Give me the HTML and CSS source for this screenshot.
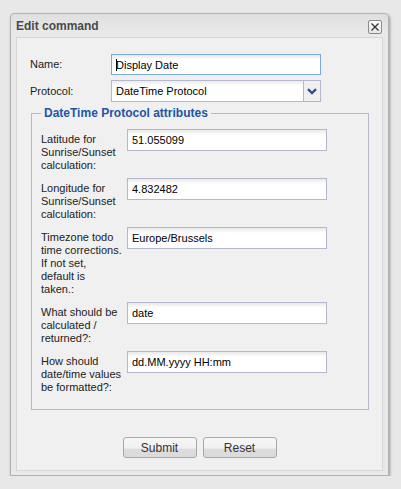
FILE: index.html
```html
<!DOCTYPE html>
<html>
<head>
<meta charset="utf-8">
<link rel="stylesheet" href="styles.css">
</head>
<body>
<div class="dialog">
  <div class="titlebar">
    <span class="title">Edit command</span>
    <span class="close"><svg width="10" height="10" viewBox="0 0 10 10"><path d="M1.5 1.5 L8.5 8.5 M8.5 1.5 L1.5 8.5" stroke="#333" stroke-width="1.3" fill="none"/></svg></span>
  </div>
  <div class="content">
    <div class="toprows">
      <label class="toplabel">Name:</label>
      <div class="field focused"><span class="caret"></span>Display Date</div>
      <label class="toplabel">Protocol:</label>
      <div class="select">
        <span class="selval">DateTime Protocol</span>
        <span class="arrow"><svg width="10" height="7" viewBox="0 0 10 7"><path d="M1 1.2 L5 5 L9 1.2" stroke="#2f4f8f" stroke-width="2.4" fill="none"/></svg></span>
      </div>
    </div>
    <fieldset class="attrs">
      <legend>DateTime Protocol attributes</legend>
      <div class="rows">
        <div class="lbl">Latitude for Sunrise/Sunset calculation:</div>
        <div class="field">51.055099</div>
        <div class="lbl">Longitude for Sunrise/Sunset calculation:</div>
        <div class="field">4.832482</div>
        <div class="lbl">Timezone todo time corrections.<br>If not set,<br>default is<br>taken.:</div>
        <div class="field">Europe/Brussels</div>
        <div class="lbl">What should be calculated / returned?:</div>
        <div class="field">date</div>
        <div class="lbl">How should date/time values be formatted?:</div>
        <div class="field">dd.MM.yyyy HH:mm</div>
      </div>
    </fieldset>
    <div class="buttons">
      <button class="btn">Submit</button>
      <button class="btn">Reset</button>
    </div>
  </div>
</div>
</body>
</html>
```
FILE: styles.css
```css
html, body {
  margin: 0;
  padding: 0;
  background: #e8e8e8;
  font-family: "Liberation Sans", Arial, sans-serif;
}
.dialog {
  margin: 13px 0 0 10px;
  width: 379px;
  box-sizing: border-box;
  border: 1px solid #b0b0b0;
  border-radius: 4px 4px 0 0;
  background: linear-gradient(#dfdfdf, #e9e9e9 20px, #e9e9e9);
  box-shadow: 1px 2px 3px rgba(0,0,0,0.35);
  padding: 0 5px 4px 5px;
}
.titlebar {
  height: 23px;
  display: flex;
  align-items: center;
  justify-content: space-between;
}
.title {
  font-weight: bold;
  font-size: 12px;
  color: #4a4a4a;
  margin-top: 1px;
}
.close {
  width: 14px;
  height: 14px;
  box-sizing: border-box;
  border: 1px solid #8a8a8a;
  border-radius: 2px;
  background: linear-gradient(#fdfdfd, #e6e6e6);
  display: flex;
  align-items: center;
  justify-content: center;
  margin-right: 1px;
  margin-top: 2px;
}
.content {
  background: #f0f0f0;
  border: 1px solid #d6d6d6;
  padding: 16px 0 12px 13px;
}
.toprows {
  display: grid;
  grid-template-columns: 81px 210px;
  row-gap: 5px;
  align-items: center;
}
.toplabel {
  font-size: 11px;
  color: #222;
  margin-top: -1px;
}
.field {
  box-sizing: border-box;
  height: 22px;
  border: 1px solid #b4b8cc;
  background: linear-gradient(#e9e9e9, #ffffff 5px, #ffffff);
  font-size: 11px;
  color: #000;
  display: flex;
  align-items: center;
  padding-left: 4px;
  position: relative;
}
.field.focused {
  height: 21px;
  border-color: #7ba9dd;
}
.caret {
  position: absolute;
  left: 4px;
  top: 4px;
  width: 1px;
  height: 12px;
  background: #000;
}
.select {
  box-sizing: border-box;
  height: 22px;
  border: 1px solid #b4b8cc;
  background: linear-gradient(#ececec, #ffffff 5px, #ffffff);
  display: flex;
  align-items: stretch;
}
.selval {
  flex: 1;
  font-size: 11px;
  color: #000;
  display: flex;
  align-items: center;
  padding-left: 4px;
}
.arrow {
  width: 16px;
  border-left: 1px solid #b4b8cc;
  background: #f0f0f0;
  display: flex;
  align-items: center;
  justify-content: center;
}
.attrs {
  margin: 4px 0 0 1px;
  width: 338px;
  box-sizing: border-box;
  border: 1px solid #b6b9cc;
  padding: 8px 0 15px 9px;
  min-width: 0;
}
.attrs legend {
  font-weight: bold;
  font-size: 12px;
  color: #1f55a5;
  padding: 0 3px;
  line-height: 15px;
}
.rows {
  display: grid;
  grid-template-columns: 86px 200px;
  row-gap: 6px;
  align-items: start;
}
.lbl {
  font-size: 11px;
  line-height: 13px;
  color: #222;
  padding-top: 4px;
  padding-right: 2px;
}
.buttons {
  display: flex;
  justify-content: center;
  gap: 6px;
  margin-top: 27px;
  padding-right: 13px;
}
.btn {
  width: 74px;
  height: 21px;
  box-sizing: border-box;
  border: 1px solid #a8a8a8;
  border-radius: 3px;
  background: linear-gradient(#f6f6f6, #f0f0f0 55%, #dcdcdc 56%, #dcdcdc);
  font-family: "Liberation Sans", Arial, sans-serif;
  font-size: 12px;
  color: #333;
  padding: 0;
}
```
